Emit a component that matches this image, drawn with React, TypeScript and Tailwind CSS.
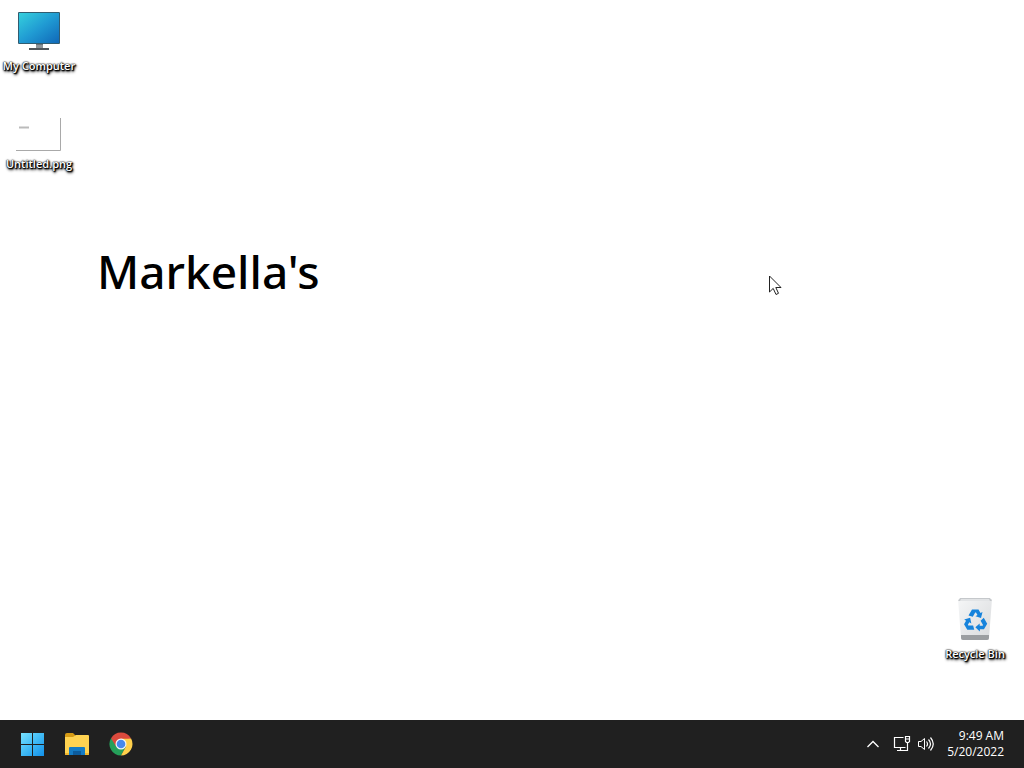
import type { ReactNode } from "react"

interface DesktopItemProps {
  label: string
  className: string
  children: ReactNode
}

function DesktopItem({ label, className, children }: DesktopItemProps) {
  return (
    <button type="button" className={`absolute flex w-[78px] flex-col items-center gap-0.5 ${className}`}>
      {children}
      <span className="whitespace-nowrap text-[11px] font-semibold leading-4 text-white [text-shadow:0_0_1px_#000,0_0_2px_#000,1px_1px_1px_#000,1px_1px_2px_#000,1px_2px_3px_#000]">
        {label}
      </span>
    </button>
  )
}

function ComputerIcon() {
  return (
    <svg width="48" height="48" viewBox="0 0 48 48" aria-hidden="true">
      <defs>
        <linearGradient id="screen" x1="0" y1="0" x2="1" y2="1">
          <stop offset="0" stopColor="#35d0dd" />
          <stop offset="0.5" stopColor="#209bd3" />
          <stop offset="1" stopColor="#1068b8" />
        </linearGradient>
      </defs>
      <path d="M21 34h7v7h-7z" fill="#8e959a" />
      <path d="M21 34h7v3h-7z" fill="#6b7379" />
      <path d="M14 40h20v2H14z" fill="#50565b" />
      <rect x="3" y="4" width="42" height="32" rx="1" fill="#315c70" />
      <rect x="4" y="5" width="40" height="30" fill="url(#screen)" />
    </svg>
  )
}

function PictureIcon() {
  return (
    <svg width="48" height="48" viewBox="0 0 48 48" aria-hidden="true">
      <rect x="1" y="11" width="44" height="33" fill="#fff" />
      <path d="M45.500 12v32.500H1" fill="none" stroke="#a9a9a9" />
      <path d="M4 21.500h10" stroke="#bbb" strokeWidth="2" />
    </svg>
  )
}

const binArrow = "M17.500 21.500l3.500-6h6.500l2 3.500 2-1-1.500 6-5.500-1.800 2-1.200-1.500-2.500h-.8l-2.400 4.200z"

function RecycleIcon() {
  return (
    <svg width="48" height="48" viewBox="0 0 48 48" aria-hidden="true">
      <defs>
        <linearGradient id="bin" x1="0" y1="0" x2="1" y2="1">
          <stop offset="0" stopColor="#f5f6f7" />
          <stop offset="1" stopColor="#d8dadc" />
        </linearGradient>
      </defs>
      <g transform="translate(0 -2)">
        <path d="M7 5h34l-3 39q0 2-2 2H12q-2 0-2-2z" fill="url(#bin)" />
        <path d="M10 41h28v3q0 2-2 2H12q-2 0-2-2z" fill="#9b9ea1" />
        <path d="M9 4h30l2 3H7z" fill="#c5c8cb" />
        <path d="M10 5h28l1 2H9z" fill="#e2e4e6" />
        <g fill="#1683dc">
          <path d={binArrow} />
          <path d={binArrow} transform="rotate(120 24.500 27)" />
          <path d={binArrow} transform="rotate(240 24.500 27)" />
        </g>
      </g>
    </svg>
  )
}

function WindowsIcon() {
  return (
    <svg width="24" height="24" viewBox="0 0 24 24" aria-hidden="true">
      <defs>
        <linearGradient id="start" x1="0" y1="0" x2="24" y2="24" gradientUnits="userSpaceOnUse">
          <stop offset="0" stopColor="#7ce5ff" />
          <stop offset="0.5" stopColor="#42bcf5" />
          <stop offset="1" stopColor="#1290ea" />
        </linearGradient>
      </defs>
      <path d="M1 1h11v11H1zM13 1h11v11H13zM1 13h11v11H1zM13 13h11v11H13z" fill="url(#start)" />
    </svg>
  )
}

function FolderIcon() {
  return (
    <svg width="25" height="24" viewBox="0 0 25 24" aria-hidden="true">
      <path d="M1 3q0-2 2-2h6l3 3v5H1z" fill="#d69b15" />
      <path d="M1 5h8l3-2h12q1 0 1 1v18q0 1-1 1H2q-1 0-1-1z" fill="#ffd351" />
      <path d="M1 21h24v1q0 1-1 1H2q-1 0-1-1z" fill="#f2b72d" />
      <path d="M5 23v-7q0-1 1-1h14q1 0 1 1v7z" fill="#147bc4" />
      <path d="M9 19h8v4H9z" fill="#0c5b9c" />
    </svg>
  )
}

function ChromeIcon() {
  return (
    <svg width="24" height="24" viewBox="0 0 24 24" aria-hidden="true">
      <path d="M12 12L2.040 6.250A11.500 11.500 0 0 1 21.960 6.250z" fill="#db4a3d" />
      <path d="M2.040 6.250A11.500 11.500 0 0 0 12 23.500L16.800 14.700 12 12z" fill="#25a05a" />
      <path d="M12 6.500h10.100A11.500 11.500 0 0 1 12 23.500l4.800-8.700z" fill="#ffd04b" />
      <path d="M2.040 6.250L7.200 14.700 12 6.500h10.100L12 5z" fill="#db4a3d" />
      <circle cx="12" cy="12" r="5.500" fill="#f3f5f6" />
      <circle cx="12" cy="12" r="4.300" fill="#4688ed" />
    </svg>
  )
}

function ChevronIcon() {
  return (
    <svg width="16" height="16" viewBox="0 0 16 16" fill="none" stroke="#fff" strokeWidth="1.300" aria-hidden="true">
      <path d="M2.500 11L8 5.500 13.500 11" />
    </svg>
  )
}

function NetworkIcon() {
  return (
    <svg width="18" height="18" viewBox="0 0 18 18" fill="none" stroke="#fff" strokeWidth="1.200" aria-hidden="true">
      <path d="M10.500 2.500h-9v10h11M7.500 12.500v3M4 15.500h10.500v-8" />
      <path d="M12.500 1.500h4v5l-1 1h-2l-1-1zM12.500 4h4" />
    </svg>
  )
}

function VolumeIcon() {
  return (
    <svg width="18" height="18" viewBox="0 0 18 18" fill="none" stroke="#fff" aria-hidden="true">
      <path d="M1.500 6.500H4l3.500-3v11l-3.500-3H1.500z" />
      <path d="M9.500 6.500q2 2.500 0 5M11.500 4.500q4 4.500 0 9M13.500 2.500q5.500 6.500 0 13" strokeWidth="1.200" />
    </svg>
  )
}

function Taskbar() {
  return (
    <footer className="flex h-12 shrink-0 items-center justify-between bg-[#202020] px-5 text-white">
      <nav aria-label="Applications" className="flex items-center gap-5">
        <button type="button" aria-label="Start">
          <WindowsIcon />
        </button>
        <button type="button" aria-label="File Explorer">
          <FolderIcon />
        </button>
        <button type="button" aria-label="Google Chrome">
          <ChromeIcon />
        </button>
      </nav>
      <div className="flex items-center gap-3">
        <button type="button" aria-label="Show hidden icons">
          <ChevronIcon />
        </button>
        <div className="flex items-center gap-1.5">
          <button type="button" aria-label="Network">
            <NetworkIcon />
          </button>
          <button type="button" aria-label="Volume">
            <VolumeIcon />
          </button>
        </div>
        <button type="button" className="text-right text-[12px] leading-4">
          <time dateTime="2022-05-20T09:49">
            <span className="block">9:49 AM</span>
            <span className="block">5/20/2022</span>
          </time>
        </button>
      </div>
    </footer>
  )
}

export default function App() {
  return (
    <div className="flex min-h-screen flex-col overflow-hidden bg-white font-['Open_Sans',sans-serif]">
      <main className="relative flex-1">
        {/* Wallpaper text */}
        <h1 className="absolute left-[97px] top-[239px] font-['Noto_Sans',sans-serif] text-[46px] font-medium leading-[64px] text-black">
          Markella's
        </h1>

        <DesktopItem label="My Computer" className="left-0 top-2">
          <ComputerIcon />
        </DesktopItem>
        <DesktopItem label="Untitled.png" className="left-0 top-[106px]">
          <PictureIcon />
        </DesktopItem>
        <DesktopItem label="Recycle Bin" className="right-[10px] bottom-[58px]">
          <RecycleIcon />
        </DesktopItem>

        {/* Pointer */}
        <svg className="absolute left-[769px] top-[275px]" width="14" height="21" viewBox="0 0 14 21" aria-hidden="true">
          <path d="M.5 1v16l3.700-3.600L7 19.500l2.500-1.200L6.800 12.500H12z" fill="#fff" stroke="#222" />
        </svg>
      </main>
      <Taskbar />
    </div>
  )
}
